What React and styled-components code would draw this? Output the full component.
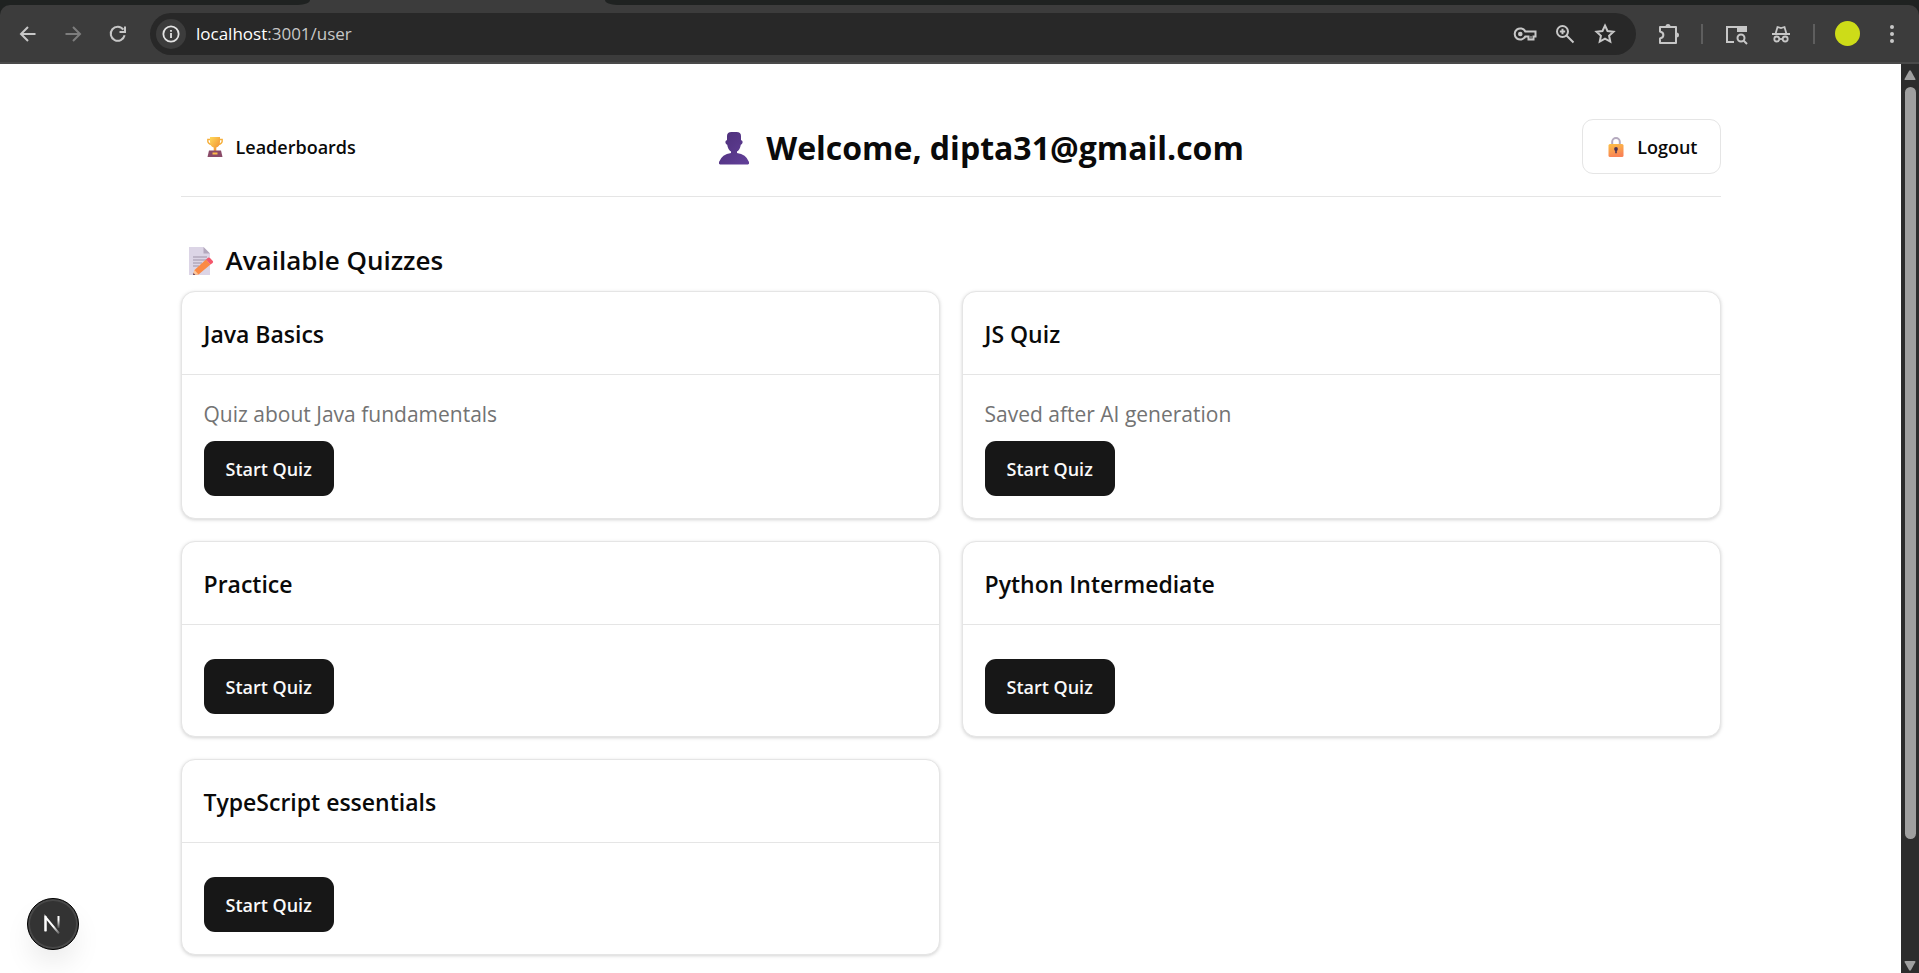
import React from "react";
import styled, { createGlobalStyle, css } from "styled-components";

const GlobalStyle = createGlobalStyle`
  *, *::before, *::after { box-sizing: border-box; }
  html, body, #root { height: 100%; }
  body { margin: 0; background: #fff; color: #0a0a0a; font-family: "Open Sans", "Noto Sans", sans-serif; overflow: hidden; }
  h1, h2, h3, p { margin: 0; }
  button, input { font-family: inherit; }
`;

const Shell = styled.div`
  display: flex;
  flex-direction: column;
  height: 100vh;
`;

/* ---------- browser chrome ---------- */

const Chrome = styled.div`
  flex: none;
  background: #1f2221;
`;

const TabStrip = styled.div`
  display: flex;
  height: 5px;
  background: #3c3c3c;
`;

const TabGap = styled.div`
  background: #1f2221;
  ${(p) =>
    p.$side === "left"
      ? css`width: 310px; border-bottom-right-radius: 12px 5px;`
      : css`flex: 1; border-bottom-left-radius: 12px 5px;`}
`;

const ActiveTab = styled.div`
  width: 295px;
`;

const Toolbar = styled.div`
  display: flex;
  align-items: center;
  height: 59px;
  padding: 0 12px 0 13px;
  border-bottom: 2px solid #4a4a4a;
  border-radius: 10px 10px 0 0;
  background: #3c3c3c;
`;

const IconButton = styled.button`
  display: flex;
  flex: none;
  align-items: center;
  justify-content: center;
  width: ${(p) => p.$w || 30}px;
  height: 32px;
  padding: 0;
  border: 0;
  background: none;
  color: ${(p) => (p.$dim ? "#7d7d7d" : "#c7c7c7")};
`;

const NavGroup = styled.div`
  display: flex;
  gap: 15px;
  margin-right: 17px;
`;

const Omnibox = styled.div`
  display: flex;
  flex: 1;
  align-items: center;
  height: 42px;
  padding: 0 16px 0 6px;
  border-radius: 21px;
  background: #282828;
`;

const SiteInfo = styled.button`
  display: flex;
  align-items: center;
  justify-content: center;
  width: 30px;
  height: 30px;
  margin-right: 10px;
  padding: 0;
  border: 0;
  border-radius: 50%;
  background: #3c3c3c;
  color: #e3e3e3;
`;

const Address = styled.div`
  flex: 1;
  color: #c7c7c7;
  font-size: 17px;
  line-height: 24px;
  b { color: #fff; font-weight: 400; }
`;

const OmniActions = styled.div`
  display: flex;
  gap: 10px;
`;

const Extras = styled.div`
  display: flex;
  align-items: center;
  margin-left: 18px;
`;

const Divider = styled.span`
  width: 2px;
  height: 20px;
  margin: 0 ${(p) => p.$right}px 0 ${(p) => p.$left}px;
  background: #5e5e5e;
`;

const Avatar = styled.button`
  width: 25px;
  height: 25px;
  margin-right: 17px;
  padding: 0;
  border: 0;
  border-radius: 50%;
  background: #cddc18;
`;

/* ---------- page ---------- */

const Viewport = styled.div`
  display: flex;
  flex: 1;
  min-height: 0;
`;

const Page = styled.main`
  flex: 1;
  overflow: hidden;
`;

const Container = styled.div`
  max-width: 1584px;
  margin: 0 auto;
  padding: 33px 22px;
`;

const Header = styled.header`
  display: flex;
  align-items: center;
  justify-content: space-between;
  padding: 22px 0;
  margin-bottom: 44px;
  border-bottom: 1px solid #e5e5e5;
`;

const Welcome = styled.h1`
  display: flex;
  align-items: center;
  gap: 15px;
  padding-top: 3px;
  font-size: 32px;
  font-weight: 700;
  line-height: 44px;
`;

const buttonBase = css`
  display: inline-flex;
  align-items: center;
  gap: 10px;
  height: 55px;
  padding: 0 22px;
  border: 1px solid transparent;
  border-radius: 11px;
  font-size: 18px;
  font-weight: 600;
  line-height: 28px;
  text-decoration: none;
  white-space: nowrap;
  svg { margin: 0 2px; }
`;

const GhostLink = styled.a`
  ${buttonBase}
  color: #0a0a0a;
`;

const OutlineButton = styled.button`
  ${buttonBase}
  border-color: #e5e5e5;
  background: #fff;
  color: #0a0a0a;
`;

const PrimaryButton = styled.button`
  ${buttonBase}
  border: 0;
  background: #171717;
  color: #fafafa;
`;

const SectionTitle = styled.h2`
  display: flex;
  align-items: center;
  gap: 12px;
  padding-left: 7px;
  margin-bottom: 11px;
  font-size: 26px;
  font-weight: 600;
  line-height: 39px;
`;

const Grid = styled.div`
  display: grid;
  grid-template-columns: 1fr 1fr;
  gap: 22px;
`;

const Card = styled.article`
  border: 1px solid #e5e5e5;
  border-radius: 14px;
  background: #fff;
  box-shadow: 0 1px 4px rgba(0, 0, 0, 0.1), 0 1px 3px rgba(0, 0, 0, 0.08);
`;

const CardTitle = styled.h3`
  padding: 23px 22px 21px;
  border-bottom: 1px solid #e5e5e5;
  font-size: 23px;
  font-weight: 600;
  line-height: 38px;
`;

const CardBody = styled.div`
  padding: 22px;
`;

const Description = styled.p`
  padding-top: 1px;
  margin-bottom: 10px;
  color: #737373;
  font-size: 21px;
  line-height: 33px;
`;

const EmptyDescription = styled.div`
  height: 12px;
`;

const ScrollTrack = styled.div`
  display: flex;
  flex: none;
  flex-direction: column;
  align-items: center;
  width: 18px;
  padding: 6px 0 2px;
  background: #2c2c2c;
`;

const ScrollThumb = styled.div`
  flex: 752;
  width: 11px;
  margin-top: 7px;
  border-radius: 6px;
  background: #9f9f9f;
`;

const ScrollRest = styled.div`
  flex: 122;
`;

const DevBadge = styled.button`
  position: fixed;
  bottom: 23px;
  left: 27px;
  display: flex;
  align-items: center;
  justify-content: center;
  width: 52px;
  height: 52px;
  padding: 0;
  border: 1px solid #000;
  border-radius: 50%;
  background: #333;
  box-shadow: inset 0 0 0 2px #484848, 0 16px 32px -8px rgba(0, 0, 0, 0.14);
`;

/* ---------- icons ---------- */

const Line = ({ size = 20, w = 2, children }) => (
  <svg width={size} height={size} viewBox="0 0 20 20" fill="none" stroke="currentColor" strokeWidth={w} aria-hidden="true">
    {children}
  </svg>
);

const BackIcon = () => (
  <Line><path d="M17.5 10H3.5M10 3L3 10l7 7" /></Line>
);
const ForwardIcon = () => (
  <Line><path d="M2.5 10h14M10 3l7 7-7 7" /></Line>
);
const ReloadIcon = () => (
  <Line><path d="M16.6 11.2A7 7 0 1 1 15.4 5.6M17 2.500V8H11.500" /></Line>
);
const InfoIcon = () => (
  <Line size={18}><circle cx="10" cy="10" r="8.500" /><path d="M10 9v5.500M10 5.500v2" /></Line>
);
const KeyIcon = () => (
  <svg width="24" height="20" viewBox="0 0 24 20" fill="none" stroke="currentColor" strokeWidth="2" aria-hidden="true">
    <path d="M12.300 7.500A5.600 5.600 0 1 0 12.300 12.500H15.500V15.500H20.500V12.500H22.500V7.500Z" />
    <circle cx="7.300" cy="10" r="2.300" fill="currentColor" stroke="none" />
    <path d="M18 12v2.500" strokeWidth="1" />
  </svg>
);
const ZoomIcon = () => (
  <Line><circle cx="7.500" cy="7.500" r="5.500" /><path d="M11.500 11.500l7 7M7.500 4.800v5.400M4.800 7.500h5.400" /></Line>
);
const StarIcon = () => (
  <Line size={22} w={1.8}>
    <path d="M10 2.300l2.300 5 5.400.6-4 3.700 1.100 5.400L10 14.300 5.200 17l1.100-5.400-4-3.700 5.400-.6z" />
  </Line>
);
const PuzzleIcon = () => (
  <svg width="24" height="24" viewBox="0 0 24 24" fill="none" stroke="currentColor" strokeWidth="2" aria-hidden="true">
    <path d="M3 5h16v16H3v-4.500c4.500-1 4.500-6 0-7z" strokeLinejoin="round" />
    <path d="M8.500 4.500a2.500 2.500 0 0 1 5 0zM19.500 10.500a2.500 2.500 0 0 1 0 5z" fill="currentColor" stroke="none" />
  </svg>
);
const LensIcon = () => (
  <svg width="24" height="22" viewBox="0 0 24 22" fill="none" stroke="currentColor" strokeWidth="2" aria-hidden="true">
    <path d="M10 19H3V4h19" />
    <path d="M13 3h10v6H13z" fill="currentColor" stroke="none" />
    <circle cx="17" cy="15" r="3.500" />
    <path d="M19.500 17.500l3.500 3.500" />
  </svg>
);
const IncognitoIcon = () => (
  <svg width="20" height="20" viewBox="0 0 20 20" fill="none" stroke="currentColor" strokeWidth="1.800" aria-hidden="true">
    <path d="M1 10h18M4.500 10L6.500 3l3.500 1 3.500-1 2 7" />
    <circle cx="5.800" cy="15" r="2.500" />
    <circle cx="14.200" cy="15" r="2.500" />
    <path d="M8.300 15h3.400" />
  </svg>
);
const MenuIcon = () => (
  <svg width="6" height="20" viewBox="0 0 6 20" fill="currentColor" aria-hidden="true">
    <circle cx="3" cy="3" r="2" /><circle cx="3" cy="10" r="2" /><circle cx="3" cy="17" r="2" />
  </svg>
);
const ScrollArrow = ({ down }) => (
  <svg width="12" height="10" viewBox="0 0 12 10" fill="#9f9f9f" aria-hidden="true">
    <path d={down ? "M1.500 0h9q1.500 0 .8 1.300L7 9Q6 10.500 5 9L.7 1.300Q0 0 1.500 0z" : "M1.500 10h9q1.500 0 .8-1.300L7 1Q6-.5 5 1L.7 8.700Q0 10 1.500 10z"} />
  </svg>
);

const TrophyIcon = () => (
  <svg width="18" height="20" viewBox="0 0 18 20" aria-hidden="true">
    <defs>
      <linearGradient id="cup" x1="0" y1="0" x2="1" y2="1">
        <stop offset="0" stopColor="#ffd95a" /><stop offset="1" stopColor="#f08a2c" />
      </linearGradient>
    </defs>
    <path d="M5 2.500H1.800Q1.200 7 6 7.500M13 2.500h3.200Q16.800 7 12 7.500" fill="none" stroke="#f6b03c" strokeWidth="1.400" />
    <path d="M4 0h10v4.500q0 5-3.700 6v3.500H7.700v-3.500Q4 9.500 4 4.500z" fill="url(#cup)" />
    <path d="M3 13.500h12L16.500 20h-15z" fill="#8a4a68" />
    <rect x="6.500" y="15.500" width="5" height="2" fill="#fcb94a" />
  </svg>
);
const LockIcon = () => (
  <svg width="18" height="20" viewBox="0 0 18 20" aria-hidden="true">
    <defs>
      <linearGradient id="lock" x1="0" y1="0" x2="0.300" y2="1">
        <stop offset="0" stopColor="#fcc045" /><stop offset="1" stopColor="#f98355" />
      </linearGradient>
    </defs>
    <path d="M5.200 9V4.800a3.800 3.800 0 0 1 7.600 0V9" fill="none" stroke="#b5aabf" strokeWidth="2" />
    <rect x="1.500" y="7" width="15" height="13" rx="1.500" fill="url(#lock)" />
    <circle cx="9" cy="12" r="1.900" fill="#4b3354" />
    <path d="M8.200 12h1.600v4.300H8.200z" fill="#4b3354" />
  </svg>
);
const PersonIcon = () => (
  <svg width="34" height="34" viewBox="0 0 34 34" aria-hidden="true">
    <defs>
      <linearGradient id="bust" x1="0" y1="0" x2="1" y2="1">
        <stop offset="0" stopColor="#4c2f78" /><stop offset="1" stopColor="#63409a" />
      </linearGradient>
    </defs>
    <path d="M10 9V5q0-4 4.500-4h5Q24 1 24 5v4q2 .5 1.600 2.500-.3 2-1.800 2.300-.8 5-3.800 6.700v1.500q9 1 12 9Q32.500 33 31 33.500H3Q1.500 33 2 31q3-8 12-9v-1.500q-3-1.700-3.800-6.700Q8.700 13.500 8.400 11.500 8 9.500 10 9z" fill="url(#bust)" />
  </svg>
);
const MemoIcon = () => (
  <svg width="26" height="28" viewBox="0 0 26 28" aria-hidden="true">
    <path d="M1 0h14.500L22 6.500V28H1z" fill="#dcd5e6" />
    <path d="M15.500 0L22 6.500h-6.500z" fill="#b3a8bd" />
    <path d="M5 10h14M5 13h14M5 16h9M5 19h6" stroke="#9d94a8" strokeWidth="1.200" />
    <path d="M6.500 23L18 12.500l4.500 5L10.500 27.500 5 28z" fill="#fb8a45" />
    <path d="M18 12.500l2-1.800q1-.7 2 .3l2.800 3q.8 1-.2 2l-2.100 1.500z" fill="#f4566b" />
    <path d="M6.500 23l4 4.500L5 28z" fill="#fbc79d" />
    <path d="M5.600 26l1.700 1.900L5 28z" fill="#5c3a58" />
  </svg>
);
const NextLogo = () => (
  <svg width="20" height="20" viewBox="0 0 20 20" fill="none" strokeWidth="2" aria-hidden="true">
    <defs>
      <linearGradient id="nStem" x1="0" y1="2" x2="0" y2="15" gradientUnits="userSpaceOnUse">
        <stop offset="0.300" stopColor="#fff" /><stop offset="1" stopColor="#fff" stopOpacity="0" />
      </linearGradient>
      <linearGradient id="nDiag" x1="11" y1="12" x2="18" y2="21" gradientUnits="userSpaceOnUse">
        <stop offset="0" stopColor="#fff" /><stop offset="1" stopColor="#fff" stopOpacity="0" />
      </linearGradient>
    </defs>
    <path d="M2.500 17V3L16 19.500" stroke="url(#nDiag)" />
    <path d="M2.500 17.500V2" stroke="#fff" />
    <path d="M15.500 2V14" stroke="url(#nStem)" />
  </svg>
);

const quizzes = [
  { title: "Java Basics", description: "Quiz about Java fundamentals" },
  { title: "JS Quiz", description: "Saved after AI generation" },
  { title: "Practice" },
  { title: "Python Intermediate" },
  { title: "TypeScript essentials" },
];

function QuizCard({ title, description }) {
  return (
    <Card>
      <CardTitle>{title}</CardTitle>
      <CardBody>
        {description ? <Description>{description}</Description> : <EmptyDescription />}
        <PrimaryButton type="button">Start Quiz</PrimaryButton>
      </CardBody>
    </Card>
  );
}

function BrowserBar() {
  return (
    <Chrome>
      <TabStrip>
        <TabGap $side="left" />
        <ActiveTab />
        <TabGap $side="right" />
      </TabStrip>
      <Toolbar>
        <NavGroup>
          <IconButton aria-label="Back"><BackIcon /></IconButton>
          <IconButton aria-label="Forward" $dim><ForwardIcon /></IconButton>
          <IconButton aria-label="Reload"><ReloadIcon /></IconButton>
        </NavGroup>
        <Omnibox>
          <SiteInfo aria-label="Site information"><InfoIcon /></SiteInfo>
          <Address><b>localhost</b>:3001/user</Address>
          <OmniActions>
            <IconButton aria-label="Passwords"><KeyIcon /></IconButton>
            <IconButton aria-label="Zoom"><ZoomIcon /></IconButton>
            <IconButton aria-label="Bookmark"><StarIcon /></IconButton>
          </OmniActions>
        </Omnibox>
        <Extras>
          <IconButton aria-label="Extensions"><PuzzleIcon /></IconButton>
          <Divider $left={17} $right={18} />
          <IconButton aria-label="Search side panel"><LensIcon /></IconButton>
          <IconButton aria-label="Incognito" $w={60}><IncognitoIcon /></IconButton>
          <Divider $left={2} $right={20} />
          <Avatar aria-label="Profile" />
          <IconButton aria-label="Menu"><MenuIcon /></IconButton>
        </Extras>
      </Toolbar>
    </Chrome>
  );
}

export default function App() {
  return (
    <>
      <GlobalStyle />
      <Shell>
        <BrowserBar />
        <Viewport>
          <Page>
            <Container>
              <Header>
                <GhostLink href="#leaderboards"><TrophyIcon />Leaderboards</GhostLink>
                <Welcome><PersonIcon />Welcome, dipta31@gmail.com</Welcome>
                <OutlineButton type="button"><LockIcon />Logout</OutlineButton>
              </Header>
              <SectionTitle><MemoIcon />Available Quizzes</SectionTitle>
              <Grid>
                {quizzes.map((q) => (
                  <QuizCard key={q.title} {...q} />
                ))}
              </Grid>
            </Container>
          </Page>
          <ScrollTrack>
            <ScrollArrow />
            <ScrollThumb />
            <ScrollRest />
            <ScrollArrow down />
          </ScrollTrack>
        </Viewport>
      </Shell>
      <DevBadge aria-label="Open Next.js Dev Tools"><NextLogo /></DevBadge>
    </>
  );
}
